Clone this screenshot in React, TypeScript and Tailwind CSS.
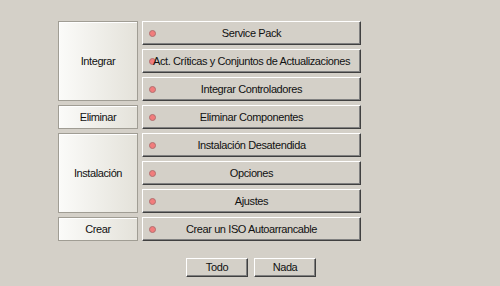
import React from 'react';

const groups = [
  { label: 'Integrar', items: ['Service Pack', 'Act. Críticas y Conjuntos de Actualizaciones', 'Integrar Controladores'] },
  { label: 'Eliminar', items: ['Eliminar Componentes'] },
  { label: 'Instalación', items: ['Instalación Desatendida', 'Opciones', 'Ajustes'] },
  { label: 'Crear', items: ['Crear un ISO Autoarrancable'] },
];

const raised =
  'border border-t-white border-l-white border-r-[#404040] border-b-[#404040] shadow-[inset_-1px_-1px_0_#808080] bg-[#d4d0c8]';

function TaskButton({ text }: { text: string }) {
  return (
    <div className={`relative h-[24px] w-[219px] flex items-center justify-center whitespace-nowrap ${raised}`}>
      <span className="absolute left-[6px] top-[8px] w-[7px] h-[7px] rounded-full bg-[#f27c7c] border border-[#b07070]" />
      <span className="relative">{text}</span>
    </div>
  );
}

export default function App() {
  return (
    <div
      className="w-[500px] h-[286px] bg-[#d4d0c8] text-[11px] tracking-[-0.4px] text-[#111] pt-[21px] pl-[58px] overflow-hidden"
      style={{ fontFamily: '"Liberation Sans", Arial, sans-serif' }}
    >
      <div className="flex flex-col gap-[4px]">
        {groups.map(g => (
          <div key={g.label} className="flex gap-[4px]">
            <div className="w-[80px] flex items-center justify-center border border-[#a09d94] shadow-[inset_1px_1px_0_#ffffff] bg-gradient-to-r from-[#fbfbf9] to-[#e4e2da]">
              {g.label}
            </div>
            <div className="flex flex-col gap-[4px]">
              {g.items.map(it => (
                <TaskButton key={it} text={it} />
              ))}
            </div>
          </div>
        ))}
      </div>
      <div className="flex gap-[6px] mt-[17px] ml-[128px]">
        <div className={`w-[62px] h-[19px] flex items-center justify-center ${raised}`}>Todo</div>
        <div className={`w-[62px] h-[19px] flex items-center justify-center ${raised}`}>Nada</div>
      </div>
    </div>
  );
}
